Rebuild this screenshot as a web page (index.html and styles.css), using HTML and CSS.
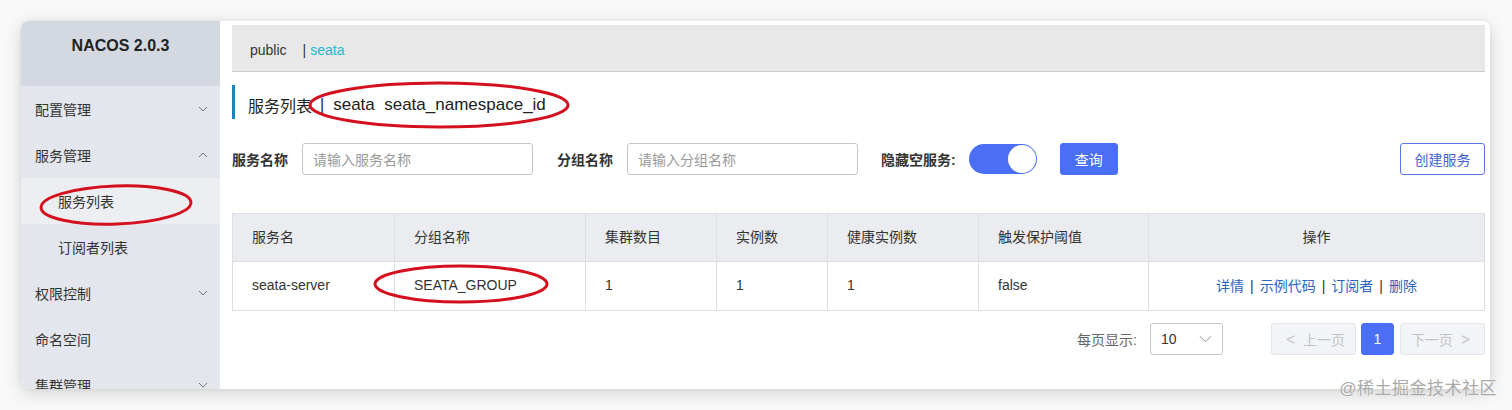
FILE: index.html
```html
<!DOCTYPE html>
<html lang="zh">
<head>
<meta charset="utf-8">
<title>NACOS</title>
<link rel="stylesheet" href="styles.css">
</head>
<body>
<div class="frame">
  <aside class="sidebar">
    <div class="brand">NACOS 2.0.3</div>
    <ul class="menu">
      <li class="item"><span>配置管理</span><svg class="chev" viewBox="0 0 10 6"><polyline points="1,1 5,5 9,1"/></svg></li>
      <li class="item"><span>服务管理</span><svg class="chev" viewBox="0 0 10 6"><polyline points="1,5 5,1 9,5"/></svg></li>
      <li class="item sub active"><span>服务列表</span></li>
      <li class="item sub"><span>订阅者列表</span></li>
      <li class="item"><span>权限控制</span><svg class="chev" viewBox="0 0 10 6"><polyline points="1,1 5,5 9,1"/></svg></li>
      <li class="item"><span>命名空间</span></li>
      <li class="item"><span>集群管理</span><svg class="chev" viewBox="0 0 10 6"><polyline points="1,1 5,5 9,1"/></svg></li>
    </ul>
  </aside>
  <main class="main">
    <div class="nsbar"><span class="ns">public</span><span class="ns-sep">|</span><span class="ns-active">seata</span></div>
    <div class="title"><span class="title-main">服务列表</span><span class="title-sep">|</span><span class="title-ns">seata&nbsp;&nbsp;seata_namespace_id</span></div>
    <div class="filters">
      <label class="flabel">服务名称</label>
      <div class="input">请输入服务名称</div>
      <label class="flabel gap">分组名称</label>
      <div class="input">请输入分组名称</div>
      <label class="flabel gap last">隐藏空服务:</label>
      <div class="switch"><span class="knob"></span></div>
      <button class="btn primary">查询</button>
      <button class="btn outline">创建服务</button>
    </div>
    <table class="grid">
      <colgroup>
        <col style="width:162px"><col style="width:191px"><col style="width:131px"><col style="width:111px"><col style="width:151px"><col style="width:170px"><col>
      </colgroup>
      <thead>
        <tr><th>服务名</th><th>分组名称</th><th>集群数目</th><th>实例数</th><th>健康实例数</th><th>触发保护阈值</th><th class="center">操作</th></tr>
      </thead>
      <tbody>
        <tr><td>seata-server</td><td>SEATA_GROUP</td><td>1</td><td>1</td><td>1</td><td>false</td>
          <td class="center"><a class="lnk">详情</a><span class="bar">|</span><a class="lnk">示例代码</a><span class="bar">|</span><a class="lnk">订阅者</a><span class="bar">|</span><a class="lnk">删除</a></td></tr>
      </tbody>
    </table>
    <div class="pager">
      <span class="plabel">每页显示:</span>
      <div class="select"><span>10</span><svg class="schev" viewBox="0 0 14 8"><polyline points="1,1 7,7 13,1"/></svg></div>
      <button class="pbtn disabled"><span class="arr">&lt;</span> 上一页</button>
      <button class="pbtn current">1</button>
      <button class="pbtn disabled">下一页 <span class="arr">&gt;</span></button>
    </div>
  </main>
</div>
<svg class="marks" viewBox="0 0 1512 410" width="1512" height="410">
  <ellipse cx="439" cy="105" rx="129" ry="22" />
  <ellipse cx="116" cy="205" rx="75" ry="19" transform="rotate(-2 116 205)" />
  <ellipse cx="461" cy="284" rx="86" ry="18" />
</svg>
<div class="watermark">@稀土掘金技术社区</div>
</body>
</html>
```
FILE: styles.css
```css
* { box-sizing: border-box; }
html, body { margin: 0; padding: 0; }
body {
  width: 1512px;
  height: 410px;
  overflow: hidden;
  background: #f9f9f9;
  font-family: "Liberation Sans", Arial, "Noto Sans CJK SC", sans-serif;
  font-size: 14px;
  color: #333;
  position: relative;
}
.frame {
  margin: 21px 0 0 21px;
  width: 1469px;
  height: 368px;
  border-radius: 8px;
  overflow: hidden;
  display: flex;
  background: #fff;
  box-shadow: 0 4px 18px rgba(0,0,0,0.16), 0 0 4px rgba(0,0,0,0.05);
}
.sidebar {
  width: 199px;
  flex: none;
  background: #e3e6ec;
}
.brand {
  height: 65px;
  background: #d4d9e1;
  text-align: center;
  font-weight: bold;
  font-size: 16px;
  line-height: 24px;
  padding-top: 13px;
  color: #222;
}
.menu { list-style: none; margin: 0; padding: 0; }
.item {
  height: 46px;
  display: flex;
  align-items: center;
  justify-content: space-between;
  padding: 0 12px 0 14px;
  font-size: 14px;
  color: #333;
}
.item.sub { padding-left: 37px; }
.item.active { background: #eceef2; }
.chev {
  width: 10px;
  height: 6px;
  fill: none;
  stroke: #777;
  stroke-width: 1;
}
.main {
  flex: 1;
  padding: 4px 5px 0 12px;
  display: flex;
  flex-direction: column;
}
.nsbar {
  height: 47px;
  background: #e8e8e8;
  border-bottom: 1px solid #ccc;
  display: flex;
  align-items: center;
  padding-left: 18px;
  padding-top: 3px;
  font-size: 14px;
}
.ns { color: #333; }
.ns-sep { margin-left: 16px; color: #333; }
.ns-active { margin-left: 4px; color: #22b8d4; }
.title {
  margin-top: 13px;
  height: 34px;
  border-left: 3px solid #1987bd;
  padding-left: 13px;
  padding-top: 6px;
  display: flex;
  align-items: center;
  font-size: 16px;
  color: #222;
}
.title-sep { margin: 0 9px 0 8px; }
.title-ns { font-size: 17px; }
.filters {
  margin-top: 24px;
  height: 32px;
  display: flex;
  align-items: center;
}
.flabel { font-weight: bold; color: #333; margin-right: 14px; }
.flabel.gap { margin-left: 24px; }
.flabel.last { margin-left: 23px; margin-right: 13px; }
.input {
  width: 231px;
  height: 32px;
  border: 1px solid #c4c6cf;
  border-radius: 3px;
  padding-left: 10px;
  display: flex;
  align-items: center;
  color: #999;
}
.switch {
  width: 68px;
  height: 30px;
  border-radius: 15px;
  background: #4a6ef5;
  position: relative;
}
.knob {
  position: absolute;
  right: 1px;
  top: 1px;
  width: 28px;
  height: 28px;
  border-radius: 50%;
  background: #fff;
}
.btn {
  height: 32px;
  border-radius: 3px;
  font-family: inherit;
  font-size: 14px;
  padding: 0;
  cursor: pointer;
}
.btn.primary {
  margin-left: 23px;
  width: 58px;
  background: #4a6ef5;
  border: 1px solid #4a6ef5;
  color: #fff;
}
.btn.outline {
  margin-left: auto;
  width: 85px;
  background: #fff;
  border: 1px solid #5a78e0;
  color: #3f62d6;
}
.grid {
  margin-top: 38px;
  width: 1253px;
  border-collapse: collapse;
  table-layout: fixed;
  font-size: 14px;
}
.grid th, .grid td {
  border: 1px solid #dcdee3;
  text-align: left;
  padding: 0 0 3px 19px;
  font-weight: normal;
  color: #333;
}
.grid th { height: 48px; background: #ebecf0; }
.grid td { height: 49px; background: #fff; }
.grid .center { text-align: center; padding: 0 0 3px 0; }
.lnk { color: #2b64c2; }
.bar { color: #333; margin: 0 6px; }
.pager {
  margin-top: 12px;
  height: 32px;
  display: flex;
  align-items: center;
  justify-content: flex-end;
}
.plabel { color: #666; margin-right: 13px; font-size: 14px; }
.select {
  width: 73px;
  height: 32px;
  border: 1px solid #c4c6cf;
  border-radius: 3px;
  display: flex;
  align-items: center;
  justify-content: space-between;
  padding: 0 10px 0 10px;
  color: #333;
  margin-right: 48px;
}
.schev { width: 13px; height: 8px; fill: none; stroke: #888; stroke-width: 1; }
.pbtn {
  height: 32px;
  border-radius: 3px;
  font-family: inherit;
  font-size: 14px;
  padding: 0;
}
.pbtn.disabled {
  width: 85px;
  background: #f3f4f7;
  border: 1px solid #e3e5ea;
  color: #c2c4ca;
}
.pbtn.current {
  width: 33px;
  margin: 0 6px 0 5px;
  background: #4a6ef5;
  border: 1px solid #4a6ef5;
  color: #fff;
}
.arr { margin: 0 4px; font-size: 16px; }
.marks {
  position: absolute;
  left: 0;
  top: 0;
  pointer-events: none;
}
.marks ellipse {
  fill: none;
  stroke: #d4101e;
  stroke-width: 3;
}
.watermark {
  position: absolute;
  right: 15px;
  top: 374px;
  font-size: 17px;
  color: #a9a9a9;
  letter-spacing: 0.5px;
  text-shadow: 0 0 1px #fff;
}
```
